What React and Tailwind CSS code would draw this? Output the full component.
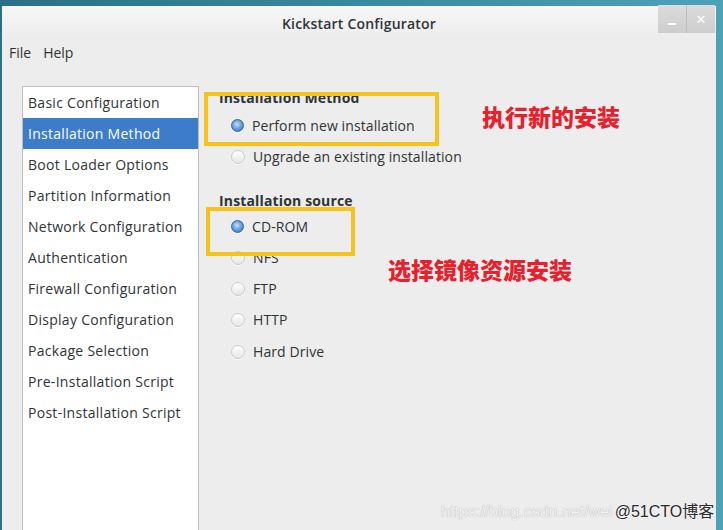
import React from "react";

const F = { fontFamily: '"Open Sans", "DejaVu Sans", sans-serif' };

function Radio({ checked }) {
  return checked ? (
    <span className="inline-block w-[13px] h-[13px] rounded-full border border-[#3465a4] bg-[radial-gradient(circle_at_45%_40%,#cfe2f7_0%,#7fb0e6_35%,#3c7bc8_80%)] shadow-[0_1px_0_rgba(255,255,255,0.8)] shrink-0" />
  ) : (
    <span className="inline-block w-[14px] h-[14px] rounded-full border border-[#cbcbcb] bg-[linear-gradient(#ffffff,#e6e6e6)] shadow-[0_1px_0_rgba(255,255,255,0.8)] shrink-0" />
  );
}

function Row({ label, checked }) {
  return (
    <div className="h-[31px] flex items-center pl-[12px] gap-[8px] text-[14px] tracking-[0.1px] text-[#2e3436]">
      <Radio checked={checked} />
      <span>{label}</span>
    </div>
  );
}

const items = [
  "Basic Configuration",
  "Installation Method",
  "Boot Loader Options",
  "Partition Information",
  "Network Configuration",
  "Authentication",
  "Firewall Configuration",
  "Display Configuration",
  "Package Selection",
  "Pre-Installation Script",
  "Post-Installation Script",
];

export default function App() {
  return (
    <div
      className="relative w-[723px] h-[530px] overflow-hidden bg-[linear-gradient(90deg,#2b7089,#3b8ea6_60%,#4ea2b8)] pt-[6px] pl-[2px]"
      style={F}
    >
      <div className="w-[714px] h-[524px] flex flex-col bg-[#ededed]">
        {/* title bar */}
        <div className="h-[34px] flex items-start bg-[linear-gradient(#f7f7f7,#ececec)] shrink-0">
          <div className="w-[58px]" />
          <div className="flex-1 h-full flex items-center justify-center text-[14px] font-semibold text-[#2e3436] pt-[1px] tracking-[0.2px]">
            Kickstart Configurator
          </div>
          <div className="w-[58px] flex -mt-[1px]">
            <div className="w-[29px] h-[28px] bg-[linear-gradient(#dcdcdc,#cdcdcd)] border-r border-[#bdbdbd] flex items-end justify-center pb-[8px]">
              <span className="block w-[8px] h-[2px] bg-white" />
            </div>
            <div className="w-[28px] h-[28px] bg-[linear-gradient(#dcdcdc,#cdcdcd)] flex items-center justify-center text-white text-[13px] font-bold leading-none">
              ✕
            </div>
          </div>
        </div>
        {/* menu */}
        <div className="h-[25px] flex items-center gap-[12px] pl-[7px] text-[14px] text-[#2e3436] shrink-0">
          <span>File</span>
          <span>Help</span>
        </div>
        {/* body */}
        <div className="flex-1 flex pt-[21px] pl-[20px] min-h-0">
          <div className="w-[177px] h-full bg-white border border-[#bdbdbd] border-b-0 shrink-0">
            {items.map((t, i) => (
              <div
                key={t}
                className={
                  "h-[31px] flex items-center pl-[5px] text-[14px] tracking-[0.28px] whitespace-nowrap " +
                  (i === 1 ? "bg-[#3d7cc9] text-white" : "text-[#2e3436]")
                }
              >
                {t}
              </div>
            ))}
          </div>
          <div className="flex-1 pl-[20px]">
            <div className="h-[22px] flex items-center text-[14px] font-bold text-[#2e3436] tracking-[0.1px]">
              Installation Method
            </div>
            <div className="h-[2px]" />
            <Row label="Perform new installation" checked />
            <Row label="Upgrade an existing installation" />
            <div className="h-[22px] mt-[17px] flex items-center text-[14px] font-bold text-[#2e3436] tracking-[0.15px]">
              Installation source
            </div>
            <Row label="CD-ROM" checked />
            <Row label="NFS" />
            <Row label="FTP" />
            <Row label="HTTP" />
            <div className="h-[1px]" />
            <Row label="Hard Drive" />
          </div>
        </div>
      </div>

      {/* annotations */}
      <div className="absolute left-[204px] top-[92px] w-[235px] h-[54px] border-[4px] border-[#f7c21b]" />
      <div className="absolute left-[206px] top-[207px] w-[149px] h-[49px] border-[4px] border-[#f7c21b]" />
      <div
        className="absolute left-[482px] top-[102px] text-[23px] leading-[28px] font-black text-[#e8202c]"
        style={{ fontFamily: '"Noto Sans CJK SC", sans-serif' }}
      >
        执行新的安装
      </div>
      <div
        className="absolute left-[388px] top-[255px] text-[23px] leading-[28px] font-black text-[#e8202c]"
        style={{ fontFamily: '"Noto Sans CJK SC", sans-serif' }}
      >
        选择镜像资源安装
      </div>
      <div
        className="absolute left-[441px] top-[501px] text-[16px] leading-[22px] whitespace-nowrap flex"
        style={{ fontFamily: '"Liberation Sans", "Noto Sans CJK SC", sans-serif' }}
      >
        <span className="text-[#f4f4f4] [text-shadow:0_0_1px_#9a9a9a]">https://blog.csdn.net/wei</span>
        <span className="text-[#2a2a2a] [text-shadow:0_0_2px_#ffffff] ml-[2px]">@51CTO博客</span>
      </div>
    </div>
  );
}
